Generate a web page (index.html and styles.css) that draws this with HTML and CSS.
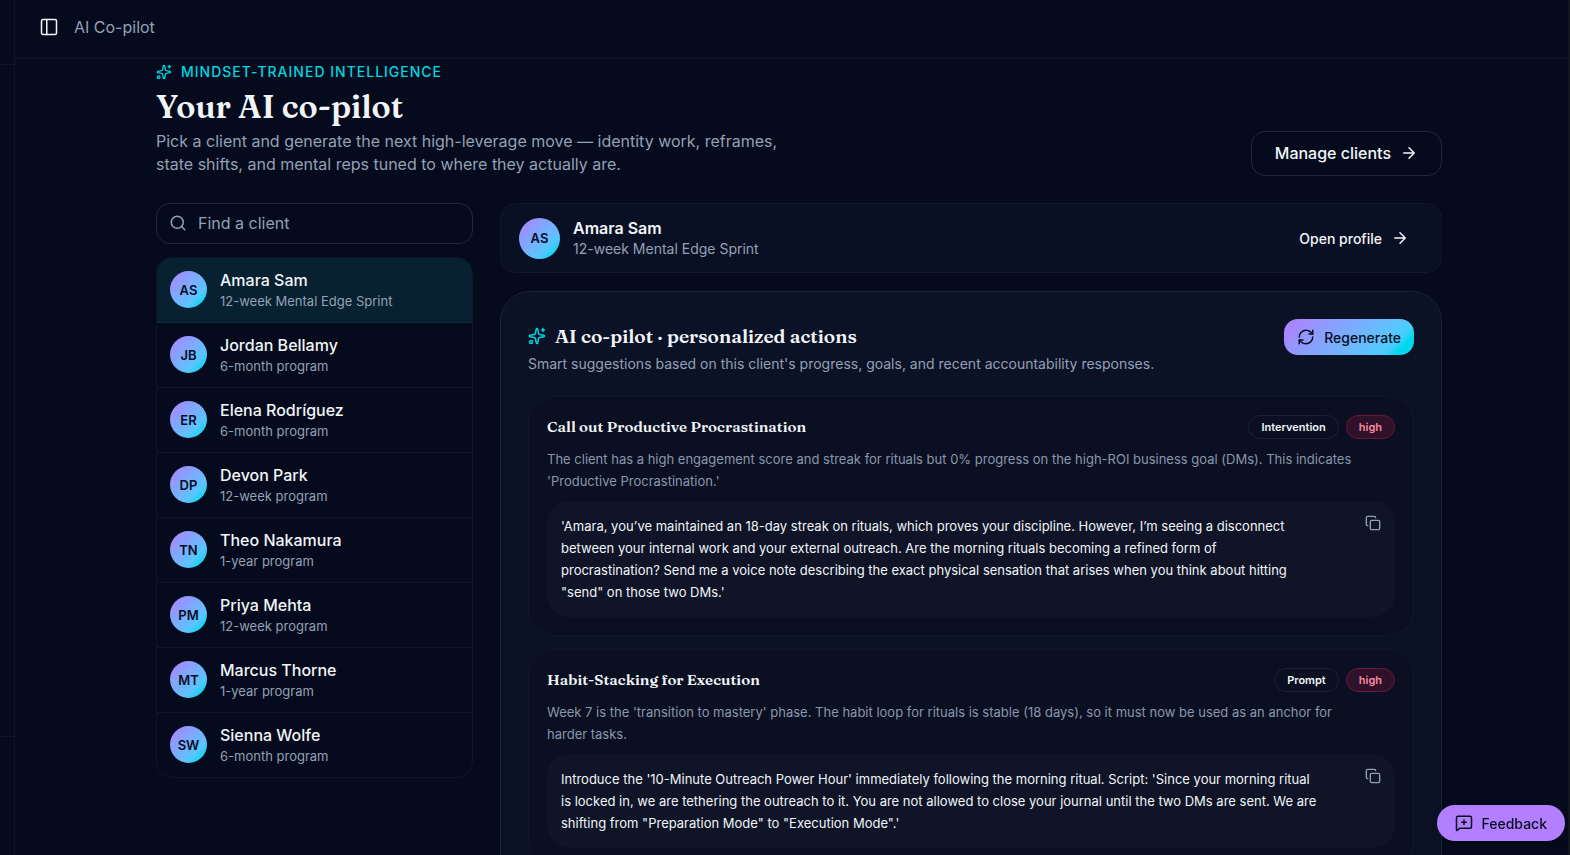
FILE: index.html
```html
<!DOCTYPE html>
<html lang="en">
<head>
    <meta charset="UTF-8">
    <meta name="viewport" content="width=device-width, initial-scale=1.0">
    <title>AI Co-pilot</title>
    <link rel="stylesheet" href="styles.css">
</head>
<body>
    <!-- Shared icons -->
    <svg class="icon-defs" aria-hidden="true">
        <symbol id="sparkles" viewBox="0 0 24 24">
            <path d="M11.017 2.814a1 1 0 0 1 1.966 0l1.051 5.558a2 2 0 0 0 1.594 1.594l5.558 1.051a1 1 0 0 1 0 1.966l-5.558 1.051a2 2 0 0 0-1.594 1.594l-1.051 5.558a1 1 0 0 1-1.966 0l-1.051-5.558a2 2 0 0 0-1.594-1.594l-5.558-1.051a1 1 0 0 1 0-1.966l5.558-1.051a2 2 0 0 0 1.594-1.594z"/>
            <path d="M20 2v4M22 4h-4"/>
            <circle cx="4" cy="20" r="2"/>
        </symbol>
        <symbol id="arrow" viewBox="0 0 24 24">
            <path d="M5 12h14M12 5l7 7-7 7"/>
        </symbol>
        <symbol id="copy" viewBox="0 0 24 24">
            <rect x="8" y="8" width="14" height="14" rx="2"/>
            <path d="M4 16c-1.1 0-2-.9-2-2V4c0-1.1.9-2 2-2h10c1.1 0 2 .9 2 2"/>
        </symbol>
    </svg>

    <div class="app">
        <!-- Collapsed sidebar -->
        <aside class="sidebar">
            <div class="sidebar-top"></div>
            <div class="sidebar-nav"></div>
            <div class="sidebar-bottom"></div>
        </aside>

        <div class="main">
            <header class="topbar">
                <button class="icon-btn" aria-label="Toggle sidebar">
                    <svg class="icon icon-18" viewBox="0 0 24 24"><rect x="2" y="2" width="20" height="20" rx="2"/><path d="M9 2v20"/></svg>
                </button>
                <span>AI Co-pilot</span>
            </header>

            <main class="content">
                <!-- Page heading -->
                <div class="page-head">
                    <div>
                        <div class="eyebrow"><svg class="icon icon-16"><use href="#sparkles"/></svg>Mindset-trained intelligence</div>
                        <h1>Your AI co-pilot</h1>
                        <p>Pick a client and generate the next high-leverage move — identity work, reframes, state shifts, and mental reps tuned to where they actually are.</p>
                    </div>
                    <a href="#" class="manage">Manage clients <svg class="icon icon-18"><use href="#arrow"/></svg></a>
                </div>

                <div class="columns">
                    <!-- Client picker -->
                    <section class="picker">
                        <label class="search">
                            <svg class="icon icon-18" viewBox="0 0 24 24"><circle cx="11" cy="11" r="8"/><path d="M21 21l-4.300-4.300"/></svg>
                            <input type="text" placeholder="Find a client" aria-label="Find a client">
                        </label>
                        <div class="clients">
                            <button class="client active"><span class="avatar">AS</span><span><b>Amara Sam</b><small>12-week Mental Edge Sprint</small></span></button>
                            <button class="client"><span class="avatar">JB</span><span><b>Jordan Bellamy</b><small>6-month program</small></span></button>
                            <button class="client"><span class="avatar">ER</span><span><b>Elena Rodríguez</b><small>6-month program</small></span></button>
                            <button class="client"><span class="avatar">DP</span><span><b>Devon Park</b><small>12-week program</small></span></button>
                            <button class="client"><span class="avatar">TN</span><span><b>Theo Nakamura</b><small>1-year program</small></span></button>
                            <button class="client"><span class="avatar">PM</span><span><b>Priya Mehta</b><small>12-week program</small></span></button>
                            <button class="client"><span class="avatar">MT</span><span><b>Marcus Thorne</b><small>1-year program</small></span></button>
                            <button class="client"><span class="avatar">SW</span><span><b>Sienna Wolfe</b><small>6-month program</small></span></button>
                        </div>
                    </section>

                    <div class="detail">
                        <section class="profile">
                            <span class="avatar avatar-lg">AS</span>
                            <div class="profile-name"><b>Amara Sam</b><small>12-week Mental Edge Sprint</small></div>
                            <a href="#" class="open-profile">Open profile <svg class="icon icon-18"><use href="#arrow"/></svg></a>
                        </section>

                        <!-- Suggestions -->
                        <section class="panel">
                            <div class="panel-head">
                                <div>
                                    <h2><svg class="icon icon-18"><use href="#sparkles"/></svg>AI co-pilot · personalized actions</h2>
                                    <p>Smart suggestions based on this client's progress, goals, and recent accountability responses.</p>
                                </div>
                                <button class="regenerate">
                                    <svg class="icon icon-18" viewBox="0 0 24 24"><path d="M3 12a9 9 0 0 1 9-9 9.750 9.750 0 0 1 6.740 2.740L21 8"/><path d="M21 3v5h-5"/><path d="M21 12a9 9 0 0 1-9 9 9.750 9.750 0 0 1-6.740-2.740L3 16"/><path d="M8 16H3v5"/></svg>
                                    Regenerate
                                </button>
                            </div>

                            <article class="card">
                                <div class="card-head">
                                    <h3>Call out Productive Procrastination</h3>
                                    <span class="tag">Intervention</span>
                                    <span class="tag tag-high">high</span>
                                </div>
                                <p>The client has a high engagement score and streak for rituals but 0% progress on the high-ROI business goal (DMs). This indicates 'Productive Procrastination.'</p>
                                <div class="script">
                                    <div>'Amara, you’ve maintained an 18-day streak on rituals, which proves your discipline. However, I’m seeing a disconnect between your internal work and your external outreach. Are the morning rituals becoming a refined form of procrastination? Send me a voice note describing the exact physical sensation that arises when you think about hitting "send" on those two DMs.'</div>
                                    <button class="icon-btn" aria-label="Copy"><svg class="icon icon-16"><use href="#copy"/></svg></button>
                                </div>
                            </article>

                            <article class="card">
                                <div class="card-head">
                                    <h3>Habit-Stacking for Execution</h3>
                                    <span class="tag">Prompt</span>
                                    <span class="tag tag-high">high</span>
                                </div>
                                <p>Week 7 is the 'transition to mastery' phase. The habit loop for rituals is stable (18 days), so it must now be used as an anchor for harder tasks.</p>
                                <div class="script">
                                    <div>Introduce the '10-Minute Outreach Power Hour' immediately following the morning ritual. Script: 'Since your morning ritual is locked in, we are tethering the outreach to it. You are not allowed to close your journal until the two DMs are sent. We are shifting from "Preparation Mode" to "Execution Mode".'</div>
                                    <button class="icon-btn" aria-label="Copy"><svg class="icon icon-16"><use href="#copy"/></svg></button>
                                </div>
                            </article>
                        </section>
                    </div>
                </div>
            </main>
        </div>
    </div>

    <button class="feedback">
        <svg class="icon icon-18" viewBox="0 0 24 24"><path d="M22 17a2 2 0 0 1-2 2H6.828a2 2 0 0 0-1.414.586l-2.202 2.202A.710.710 0 0 1 2 21.286V5a2 2 0 0 1 2-2h16a2 2 0 0 1 2 2z"/><path d="M12 8v6M9 11h6"/></svg>
        Feedback
    </button>
</body>
</html>
```
FILE: styles.css
```css
* {
    box-sizing: border-box;
}
body {
    margin: 0;
    font-family: Inter, sans-serif;
    font-size: 16px;
    color: #f1f5f9;
    background: #050b1c;
    overflow: hidden;
}
h1, h2, h3, p {
    margin: 0;
}
h1, h2, h3 {
    font-family: Fraunces, "Liberation Serif", serif;
    font-weight: 600;
}
button, input {
    font: inherit;
    color: inherit;
    background: none;
    border: none;
    padding: 0;
}
button {
    cursor: pointer;
}
a {
    color: inherit;
    text-decoration: none;
}
.icon-defs {
    display: none;
}
.icon {
    fill: none;
    stroke: currentColor;
    stroke-width: 2;
    stroke-linecap: round;
    stroke-linejoin: round;
    flex-shrink: 0;
}
.icon-16 { width: 16px; height: 16px; }
.icon-18 { width: 18px; height: 18px; }
.icon-btn {
    display: flex;
}

/* Shell */
.app {
    display: flex;
    height: 100vh;
    border-right: 2px solid #14161b;
}
.sidebar {
    display: flex;
    flex-direction: column;
    width: 15px;
    border-right: 1px solid #101526;
}
.sidebar-top {
    height: 65px;
    border-bottom: 1px solid #101526;
}
.sidebar-nav {
    flex: 1;
}
.sidebar-bottom {
    height: 119px;
    border-top: 1px solid #101526;
}
.main {
    flex: 1;
    min-width: 0;
    display: flex;
    flex-direction: column;
}
.topbar {
    display: flex;
    align-items: center;
    gap: 16px;
    height: 59px;
    flex-shrink: 0;
    padding: 0 25px 4px;
    border-bottom: 1px solid #101526;
    color: #94a0b4;
}
.topbar .icon-btn {
    color: #f1f5f9;
}
.content {
    flex: 1;
    min-height: 0;
    overflow: hidden;
    padding: 4px 126px 0 141px;
}

/* Heading */
.page-head {
    display: flex;
    justify-content: space-between;
    align-items: flex-end;
    margin-bottom: 27px;
}
.eyebrow {
    display: flex;
    align-items: center;
    gap: 9px;
    font-size: 14px;
    line-height: 18px;
    font-weight: 500;
    letter-spacing: 1px;
    text-transform: uppercase;
    color: #00d5e0;
}
h1 {
    font-size: 32px;
    line-height: 40px;
    margin: 6px 0 3px;
}
.page-head p {
    max-width: 648px;
    line-height: 23px;
    color: #94a0b4;
}
.manage {
    display: flex;
    align-items: center;
    gap: 9px;
    height: 45px;
    padding: 0 23px 1px;
    border: 1px solid #242838;
    border-radius: 14px;
    font-weight: 500;
}

/* Columns */
.columns {
    display: grid;
    grid-template-columns: 317px 1fr;
    gap: 27px;
    align-items: start;
}
.search {
    display: flex;
    align-items: center;
    gap: 11px;
    height: 41px;
    padding: 0 12px 1px;
    margin-bottom: 13px;
    border: 1px solid #242838;
    border-radius: 14px;
    color: #94a0b4;
}
.search input {
    flex: 1;
    min-width: 0;
    outline: none;
}
.search input::placeholder {
    color: #94a0b4;
    opacity: 1;
}
.clients {
    border: 1px solid #101526;
    border-radius: 16px;
    overflow: hidden;
}
.client {
    display: flex;
    align-items: center;
    gap: 13px;
    width: 100%;
    height: 65px;
    padding: 0 13px 1px;
    border-bottom: 1px solid #101526;
    text-align: left;
}
.client:last-child {
    height: 64px;
    border-bottom: none;
}
.client.active {
    background: #072131;
    border-bottom-color: #0e2b3b;
}
.client b, .client small, .profile b, .profile small {
    display: block;
}
.client b {
    font-weight: 500;
    line-height: 23px;
}
.client small {
    font-size: 13px;
    line-height: 18px;
    color: #94a0b4;
}
.avatar {
    display: flex;
    align-items: center;
    justify-content: center;
    flex-shrink: 0;
    width: 37px;
    height: 37px;
    border-radius: 50%;
    background: linear-gradient(135deg, #b17fff 0%, #5bc5ff 70%, #00d8f0 90%);
    color: #080d1e;
    font-size: 13px;
    font-weight: 600;
}
.avatar-lg {
    width: 41px;
    height: 41px;
}

/* Selected client */
.profile {
    display: flex;
    align-items: center;
    gap: 13px;
    height: 70px;
    padding: 0 18px;
    margin-bottom: 18px;
    background: #0a1023;
    border: 1px solid #131829;
    border-radius: 16px;
}
.profile-name {
    flex: 1;
}
.profile b {
    font-weight: 600;
    line-height: 22px;
}
.profile small {
    font-size: 14px;
    line-height: 20px;
    color: #94a0b4;
}
.open-profile {
    display: flex;
    align-items: center;
    gap: 9px;
    padding: 0 14px;
    font-size: 14px;
    font-weight: 500;
}

/* Suggestions panel */
.panel {
    padding: 27px;
    background: #0c1225;
    border: 1px solid #1c2134;
    border-radius: 30px;
}
.panel-head {
    display: flex;
    justify-content: space-between;
    align-items: flex-start;
    margin-bottom: 22px;
}
h2 {
    display: flex;
    align-items: center;
    gap: 9px;
    font-size: 19px;
    line-height: 34px;
}
h2 .icon {
    color: #00d5e0;
}
.panel-head p {
    font-size: 14px;
    line-height: 21px;
    color: #94a0b4;
}
.regenerate {
    display: flex;
    align-items: center;
    gap: 9px;
    height: 36px;
    padding: 0 13px;
    border-radius: 14px;
    background: linear-gradient(135deg, #b17fff 0%, #5bc5ff 72%, #45cffa 82%, #00d8f0 88%);
    color: #080d1e;
    font-size: 14px;
    font-weight: 500;
}
.card {
    padding: 18px;
    background: #0a0f21;
    border: 1px solid #12172a;
    border-radius: 26px;
}
.card + .card {
    margin-top: 13px;
}
.card-head {
    display: flex;
    align-items: center;
    gap: 7px;
}
h3 {
    flex: 1;
    font-size: 15px;
    line-height: 24px;
}
.tag {
    height: 24px;
    padding: 0 12px;
    border: 1px solid #1c2134;
    border-radius: 12px;
    font-size: 11px;
    line-height: 22px;
    font-weight: 600;
}
.tag-high {
    background: #30112a;
    border-color: #6b1738;
    color: #f98a9c;
}
.card p {
    margin: 9px 0;
    padding-right: 24px;
    font-size: 13px;
    line-height: 22px;
    color: #8b97ab;
}
.script {
    display: flex;
    justify-content: space-between;
    align-items: flex-start;
    gap: 48px;
    padding: 14px;
    background: #0f1427;
    border-radius: 22px;
    font-size: 13px;
    line-height: 22px;
}
.script .icon-btn {
    color: #94a0b4;
}

.feedback {
    position: fixed;
    right: 5px;
    bottom: 14px;
    display: flex;
    align-items: center;
    gap: 9px;
    height: 36px;
    padding: 0 18px;
    border-radius: 18px;
    background: #b17fff;
    color: #080d1e;
    font-size: 14px;
    font-weight: 500;
    box-shadow: 0 4px 8px rgba(0,0,0,0.2);
}
```
